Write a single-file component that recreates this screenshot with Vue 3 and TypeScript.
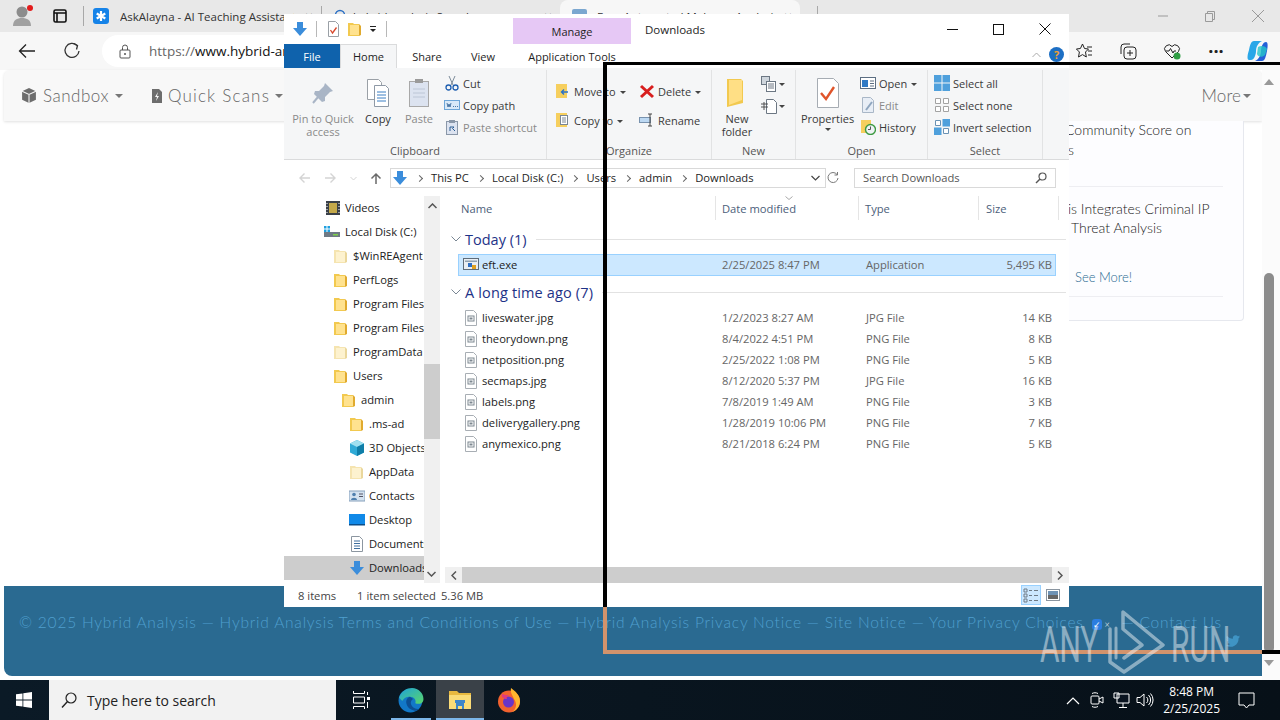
<template>
  <div class="screen">
    <svg class="defs" width="0" height="0" aria-hidden="true">
      <symbol id="folder" viewBox="0 0 16 16">
        <path d="M1 2h5l1 1h5v12H1z" fill="#f2c94f" />
        <path d="M3 4h9v10H3z" fill="#ffe28f" />
        <path d="M12 3l2 2v9l-2 1z" fill="#e0aa2e" />
      </symbol>
      <symbol id="folder-pale" viewBox="0 0 16 16">
        <path d="M1 2h5l1 1h5v12H1z" fill="#f5e4b0" />
        <path d="M3 4h9v10H3z" fill="#fdf2cf" />
        <path d="M12 3l2 2v9l-2 1z" fill="#ead79c" />
      </symbol>
      <symbol id="arrow-down" viewBox="0 0 16 16">
        <path d="M5 1h6v6h4l-7 8-7-8h4z" fill="#3b8ddb" />
      </symbol>
      <symbol id="image-file" viewBox="0 0 16 16">
        <path d="M2.500.500h8l3 3v12h-11z" fill="#fff" stroke="#a8aeb4" />
        <rect x="5" y="6" width="6" height="5" fill="#fff" stroke="#7d8790" />
        <rect x="6.500" y="7.500" width="3" height="2" fill="#7d8790" />
      </symbol>
    </svg>

    <div class="browser">
      <div class="tabstrip">
        <div class="avatar">
          <svg width="20" height="22" viewBox="0 0 20 22">
            <circle cx="10" cy="7" r="5.500" fill="#8c8c8c" />
            <path d="M1 21c0-6 4-8 9-8s9 2 9 8z" fill="#a0a0a0" />
          </svg>
          <span class="avatar-dot"></span>
        </div>
        <svg class="tab-actions" width="16" height="16" viewBox="0 0 16 16">
          <rect x="2" y="2" width="12" height="12" rx="1.500" fill="none" stroke="#111" stroke-width="1.600" />
          <path d="M2 5h12M5 5v9" stroke="#111" stroke-width="1.600" />
        </svg>
        <span class="tab-sep"></span>
        <div class="tab first">
          <span class="favicon">
            <svg width="12" height="12" viewBox="0 0 12 12">
              <path d="M6 1v10M1.700 3.500l8.600 5M10.300 3.500l-8.600 5" stroke="#fff" stroke-width="2.200" />
            </svg>
          </span>
          <span class="tab-title">AskAlayna - AI Teaching Assistant</span>
          <span class="tab-x">×</span>
        </div>
        <span class="tab-sep tab-sep-b"></span>
        <div class="tab second">
          <svg width="14" height="14" viewBox="0 0 14 14">
            <circle cx="6" cy="6" r="4.500" fill="none" stroke="#2a6fc4" stroke-width="1.500" />
            <path d="M9.500 9.500L13 13" stroke="#2a6fc4" stroke-width="1.500" />
          </svg>
          <span class="tab-title">hybrid-analysis Search</span>
          <span class="tab-x">×</span>
        </div>
        <div class="tab third">
          <span class="tab-icon"></span>
          <span class="tab-title">Free Automated Malware Analysis</span>
          <span class="tab-x">×</span>
        </div>
        <span class="tab-sep tab-sep-c"></span>
        <div class="winctl">
          <span>
            <svg width="12" height="12" viewBox="0 0 12 12"><path d="M1 6h10" stroke="#9a9a9a" /></svg>
          </span>
          <span>
            <svg width="12" height="12" viewBox="0 0 12 12"><path d="M1.500 3.500h7v8h-7zM3.500 3.500v-2h7v8h-2" fill="none" stroke="#9a9a9a" /></svg>
          </span>
          <span>
            <svg width="14" height="14" viewBox="0 0 14 14"><path d="M1 1l12 12M13 1L1 13" stroke="#9a9a9a" /></svg>
          </span>
        </div>
      </div>

      <div class="toolbar">
        <svg class="tb-back" width="18" height="16" viewBox="0 0 18 16">
          <path d="M17 8H2M8 1.500L1.500 8 8 14.500" fill="none" stroke="#222" stroke-width="1.300" />
        </svg>
        <svg class="tb-reload" width="18" height="18" viewBox="0 0 18 18">
          <path d="M14 3.500A7 7 0 1 0 16 9" fill="none" stroke="#333" stroke-width="1.300" />
          <path d="M10.500 1.500l4 2-1 4" fill="none" stroke="#333" stroke-width="1.300" />
        </svg>
        <div class="urlbar">
          <svg width="12" height="15" viewBox="0 0 12 15">
            <rect x="1" y="6" width="10" height="8" rx="1" fill="none" stroke="#555" />
            <path d="M3.500 6V3.500a2.500 2.500 0 0 1 5 0V6" fill="none" stroke="#555" />
            <circle cx="6" cy="10" r="1" fill="#555" />
          </svg>
          <span class="url"><span class="url-dim">https://</span>www.hybrid-analysis.com</span>
        </div>
        <div class="tb-right">
          <svg width="18" height="18" viewBox="0 0 18 18">
            <path d="M7.500 2l2 4.500 4 .5-3 3 .8 5-3.800-2.400-4 2.400.9-5-3-3 4-.5z" fill="none" stroke="#222" />
            <path d="M12 5h5M13 9h4M13 13h4" stroke="#222" />
          </svg>
          <svg width="18" height="18" viewBox="0 0 18 18">
            <rect x="5" y="5" width="12" height="12" rx="3" fill="none" stroke="#222" />
            <path d="M2 12V5a3 3 0 0 1 3-3h6M11 8v6M8 11h6" fill="none" stroke="#222" />
          </svg>
          <svg width="18" height="18" viewBox="0 0 18 18">
            <path d="M9 16L2.500 9.500a4 4 0 0 1 6.500-5 4 4 0 0 1 6.500 5z" fill="none" stroke="#222" />
            <path d="M3 9h3l1.500-2.500L10 11l1-2h2" fill="none" stroke="#222" />
            <circle cx="14" cy="14" r="3.500" fill="#2f9e44" />
          </svg>
          <span class="tb-dots">···</span>
          <svg width="24" height="24" viewBox="0 0 24 24">
            <path d="M8 2h8c-4 2-6 6-6 10s-2 9-5 9H3C1 21 1 17 3 11 4 6 5 2 8 2z" fill="#2aa7e8" />
            <path d="M16 22H9c4-2 6-6 6-10s2-9 5-9c2 0 2 4 1 9-1 5-2 10-5 10z" fill="#2460d8" />
            <path d="M12 8c3-2 8-1 9 2l-2 6c-3 3-7 2-8-1z" fill="#26c5c9" opacity=".8" />
          </svg>
        </div>
      </div>

      <div class="viewport">
        <div class="page">
          <nav class="site-nav">
            <span class="nav-item sandbox">
              <svg width="16" height="17" viewBox="0 0 15 16">
                <path d="M7.500 1l6.500 3v8l-6.500 3L1 12V4z" fill="#6d6d6d" />
                <path d="M1 4l6.500 3L14 4M7.500 7v8" fill="none" stroke="#f7f7f7" />
              </svg>
              Sandbox<i class="caret"></i>
            </span>
            <span class="nav-item quick">
              <svg width="12" height="16" viewBox="0 0 12 16">
                <path d="M1 1h7l3 3v11H1z" fill="#6d6d6d" />
                <path d="M7 4L4 9h2l-1 4 3-5H6z" fill="#f7f7f7" />
              </svg>
              Quick Scans<i class="caret"></i>
            </span>
            <span class="nav-item more">More<i class="caret"></i></span>
          </nav>
          <div class="page-main">
            <aside class="news-card">
              <div class="news-item first-news">
                <p>Community Score on</p>
                <p>is</p>
              </div>
              <div class="news-item second-news">
                <p>is Integrates Criminal IP</p>
                <p class="indent">Threat Analysis</p>
                <a class="see-more">See More!</a>
              </div>
            </aside>
          </div>
          <footer class="site-footer">
            <p>© 2025 Hybrid Analysis — Hybrid Analysis Terms and Conditions of Use — Hybrid Analysis Privacy Notice — Site Notice — Your Privacy Choices <span class="privacy-badge"><b>✓</b><em>×</em></span> — Contact Us</p>
            <svg class="twitter" width="14" height="12" viewBox="0 0 24 20">
              <path d="M24 2.400c-.9.400-1.800.700-2.800.800 1-.6 1.800-1.600 2.200-2.700-1 .6-2 1-3.100 1.200A4.900 4.900 0 0 0 11.900 6.200C7.800 6 4.200 4 1.700.9c-1.300 2.300-.6 5.100 1.500 6.500-.8 0-1.600-.2-2.200-.6 0 2.400 1.700 4.400 4 4.900-.7.200-1.500.2-2.200.1.600 2 2.400 3.400 4.600 3.400A9.900 9.900 0 0 1 0 17.700 14 14 0 0 0 21.500 5.300c1-.7 1.800-1.700 2.500-2.900z" fill="#3f94c4" />
            </svg>
          </footer>
        </div>
        <div class="page-scroll">
          <i class="sb-up"></i>
          <span class="sb-thumb"></span>
          <i class="sb-down"></i>
        </div>
      </div>
    </div>

    <div class="taskbar">
      <span class="start">
        <svg width="16" height="16" viewBox="0 0 16 16">
          <path d="M0 2.300l6.500-.9v6.200H0zM7.300 1.300L16 0v7.600H7.300zM0 8.400h6.500v6.200L0 13.700zM7.300 8.400H16V16l-8.700-1.200z" fill="#fff" />
        </svg>
      </span>
      <div class="searchbox">
        <svg width="18" height="18" viewBox="0 0 18 18">
          <circle cx="11" cy="7" r="5" fill="none" stroke="#222" stroke-width="1.200" />
          <path d="M7.500 10.500L2 16.500" stroke="#222" stroke-width="1.400" />
        </svg>
        <span>Type here to search</span>
      </div>
      <span class="task-btn">
        <svg width="18" height="18" viewBox="0 0 18 18">
          <path d="M1.500 0v2.500h11V0M1.500 6h11v6h-11zM1.500 18v-2.500h11V18" fill="none" stroke="#fff" />
          <path d="M15 6h3v3h-3z" fill="#fff" />
          <path d="M15.500 1v3M15.500 11v6" stroke="#fff" />
        </svg>
      </span>
      <span class="task-btn edge">
        <svg width="26" height="26" viewBox="0 0 24 24">
          <defs>
            <linearGradient id="edge-top" x1="0" y1="0" x2="1" y2="1">
              <stop offset="0" stop-color="#1fa3d8" />
              <stop offset="1" stop-color="#5ad66a" />
            </linearGradient>
          </defs>
          <circle cx="11.500" cy="12.500" r="11" fill="#1278c8" />
          <path d="M1 10C3 4 8 1 13 1c6 0 10.500 5 10.500 10 0 4-4 5.500-7.500 4 1-3-1-6-5-6-4 0-6 2-7 4z" fill="url(#edge-top)" />
          <path d="M11 9c-3 1-4 4-3 7 1 4 5 6 9 6l3-2c-4 1-7-1-8-4-.5-2 0-4 2-5z" fill="#0c4f94" />
        </svg>
      </span>
      <span class="task-btn active">
        <svg width="22" height="18" viewBox="0 0 22 18">
          <path d="M0 0h8l2 2h12v16H0z" fill="#e9b93f" />
          <path d="M0 4h22v14H0z" fill="#fbdc77" />
          <path d="M6 9h10v3h-1v6h-2v-3H9v3H7v-6H6z" fill="#3f86c8" />
        </svg>
      </span>
      <span class="task-btn">
        <svg width="24" height="26" viewBox="0 0 24 26">
          <circle cx="12" cy="14.500" r="11" fill="#f2622e" />
          <path d="M14 1c4 3 9 7 9 13 0 5-3 9-8 11 5-3 5-9 2-13-1-3-4-6-3-11z" fill="#ffb52e" />
          <circle cx="11.500" cy="15" r="5.500" fill="#6a35c8" />
          <path d="M5 7c2 1 5 1 7 1-2 1-3 3-2 4-3 0-6-2-5-5z" fill="#e0397f" />
        </svg>
      </span>
      <div class="tray">
        <span class="tray-ic">
          <svg width="14" height="9" viewBox="0 0 14 9"><path d="M1 8l6-6 6 6" fill="none" stroke="#fff" stroke-width="1.200" /></svg>
        </span>
        <span class="tray-ic">
          <svg width="14" height="18" viewBox="0 0 14 18">
            <rect x="1" y="5" width="8" height="8" rx="1" fill="none" stroke="#fff" />
            <path d="M9 8l4-2v6l-4-2M2 2.500c2-1 4-1 6 0M2 15.500c2 1 4 1 6 0" fill="none" stroke="#fff" />
          </svg>
        </span>
        <span class="tray-ic">
          <svg width="17" height="17" viewBox="0 0 17 17">
            <path d="M4 2h12v9H4zM1 1h5v5H1zM10 11v4M6 15.500h8" fill="#0a1420" stroke="#fff" />
          </svg>
        </span>
        <span class="tray-ic">
          <svg width="18" height="16" viewBox="0 0 18 16">
            <path d="M1 5.500h3L8 2v12l-4-3.500H1zM10.500 5a4 4 0 0 1 0 6M12.500 3a7 7 0 0 1 0 10M14.500 1.500a9.500 9.500 0 0 1 0 13" fill="none" stroke="#fff" />
          </svg>
        </span>
        <div class="clock">
          <span>8:48 PM</span>
          <span>2/25/2025</span>
        </div>
        <svg class="notif" width="17" height="17" viewBox="0 0 17 17">
          <path d="M1 1h15v12h-5l-2.500 3L6 13H1z" fill="none" stroke="#fff" />
        </svg>
      </div>
    </div>

    <!-- explorer window floating on top of the browser -->
    <section class="explorer">
      <header class="ex-title">
        <svg class="qat-down" width="16" height="16"><use href="#arrow-down" /></svg>
        <i class="qat-sep"></i>
        <svg class="qat-check" width="15" height="16" viewBox="0 0 15 16">
          <path d="M2.500.500h7l3 3v12h-10z" fill="#fff" stroke="#9aa0a6" />
          <path d="M4.500 9l2 3 4-5.500" fill="none" stroke="#d8482c" stroke-width="1.300" />
        </svg>
        <svg class="qat-folder" width="16" height="16"><use href="#folder" /></svg>
        <svg class="qat-drop" width="8" height="8" viewBox="0 0 8 8">
          <path d="M1 1.500h6" stroke="#222" />
          <path d="M1 4h6L4 7z" fill="#222" />
        </svg>
        <i class="qat-sep qat-sep-b"></i>
        <span class="manage">Manage</span>
        <span class="ex-name">Downloads</span>
        <div class="ex-ctl">
          <svg width="11" height="11" viewBox="0 0 11 11"><path d="M0 5.500h11" stroke="#111" /></svg>
          <svg width="11" height="11" viewBox="0 0 11 11"><rect x=".5" y=".5" width="10" height="10" fill="none" stroke="#111" /></svg>
          <svg width="12" height="12" viewBox="0 0 12 12"><path d="M.5.500l11 11M11.500.500l-11 11" stroke="#111" /></svg>
        </div>
      </header>

      <div class="ex-tabs">
        <span class="ex-tab file">File</span>
        <span class="ex-tab home">Home</span>
        <span class="ex-tab share">Share</span>
        <span class="ex-tab view">View</span>
        <span class="ex-tab tools">Application Tools</span>
        <span class="tabs-right">
          <svg width="9" height="6" viewBox="0 0 9 6"><path d="M.5 5l4-4 4 4" fill="none" stroke="#aaa" /></svg>
          <span class="help">?</span>
        </span>
      </div>

      <div class="ribbon">
        <div class="r-group clipboard">
          <div class="r-items">
            <div class="big pin">
              <svg width="24" height="24" viewBox="0 0 24 24">
                <path d="M14 2l8 8-3 1-5 5 0 4-3 1-8-8 1-3 4 0 5-5z" fill="#a9b5c6" />
                <path d="M7 16l-5 6" stroke="#a9b5c6" stroke-width="2" />
              </svg>
              <span>Pin to Quick<br />access</span>
            </div>
            <div class="big copy">
              <svg width="26" height="30" viewBox="0 0 26 30">
                <path d="M2.500 1.500h11l3 3v17h-14z" fill="#fff" stroke="#9aa0a6" />
                <path d="M9.500 7.500h11l3 3v18h-14z" fill="#fff" stroke="#8e99a6" />
                <path d="M12 14h9M12 17h9M12 20h9M12 23h9" stroke="#3b7fc4" />
              </svg>
              <span>Copy</span>
            </div>
            <div class="big paste">
              <svg width="22" height="30" viewBox="0 0 22 30">
                <rect x="1.500" y="3.500" width="19" height="25" fill="#dce3f0" stroke="#a8a8a8" />
                <rect x="7" y="1" width="8" height="4" fill="#9a9a9a" />
                <path d="M5 11h12M5 15h12M5 19h12" stroke="#bcc6d6" />
              </svg>
              <span>Paste</span>
            </div>
            <div class="small-col">
              <div class="small">
                <svg width="16" height="16" viewBox="0 0 16 16">
                  <path d="M5 1l4 9M11 1L7 10" stroke="#7d8c9b" />
                  <circle cx="4.500" cy="12.500" r="2.500" fill="none" stroke="#1f5fb0" stroke-width="1.300" />
                  <circle cx="11.500" cy="12.500" r="2.500" fill="none" stroke="#1f5fb0" stroke-width="1.300" />
                </svg>
                <span>Cut</span>
              </div>
              <div class="small">
                <svg width="16" height="16" viewBox="0 0 16 16">
                  <rect x=".5" y="3.500" width="15" height="9" fill="#d9e9f8" stroke="#6ea6d8" />
                  <path d="M3 6l1 4 1-3 1 3 1-4M9 9.500h1M11 9.500h1M13 9.500h1" fill="none" stroke="#2a5c92" stroke-width=".8" />
                </svg>
                <span>Copy path</span>
              </div>
              <div class="small muted">
                <svg width="16" height="16" viewBox="0 0 16 16">
                  <rect x="2.500" y="2.500" width="11" height="13" fill="#dce3f0" stroke="#8a97a8" />
                  <rect x="5" y="1" width="6" height="3" fill="#8a97a8" />
                  <path d="M6 12V8h4l-1.500 1.500L11 12" fill="none" stroke="#2a5c92" />
                </svg>
                <span>Paste shortcut</span>
              </div>
            </div>
          </div>
          <label>Clipboard</label>
        </div>

        <div class="r-group organize">
          <div class="r-items">
            <div class="two-col">
              <div class="small">
                <svg width="16" height="16" viewBox="0 0 16 16">
                  <path d="M1 1h11v14H1z" fill="#f6cf5e" />
                  <path d="M13 9H7M9 6.500L6.500 9 9 11.500" fill="none" stroke="#2a72c8" stroke-width="1.400" />
                </svg>
                <span>Move to<i class="mini-caret"></i></span>
              </div>
              <div class="small">
                <svg width="16" height="16" viewBox="0 0 16 16">
                  <path d="M1 1h11v14H1z" fill="#f6cf5e" />
                  <rect x="5.500" y="3.500" width="7" height="9" fill="#fff" stroke="#7a8794" />
                  <path d="M7 6h4M7 8h4M7 10h4" stroke="#7a8794" />
                </svg>
                <span>Copy to<i class="mini-caret"></i></span>
              </div>
            </div>
            <div class="two-col">
              <div class="small">
                <svg width="16" height="16" viewBox="0 0 16 16">
                  <path d="M2 3l12 11M14 3L2 14" stroke="#d81e1e" stroke-width="3" />
                </svg>
                <span>Delete<i class="mini-caret"></i></span>
              </div>
              <div class="small">
                <svg width="16" height="16" viewBox="0 0 16 16">
                  <rect x=".5" y="5.500" width="11" height="5" fill="#bcd8f2" stroke="#7892ae" />
                  <path d="M11 2v12M9 2h4M9 14h4" stroke="#444" />
                </svg>
                <span>Rename</span>
              </div>
            </div>
          </div>
          <label>Organize</label>
        </div>

        <div class="r-group newg">
          <div class="r-items">
            <div class="big new-folder">
              <svg width="24" height="32" viewBox="0 0 24 32">
                <path d="M2 2h14l2 2v22L2 30z" fill="#f2c94f" />
                <path d="M4 3h13v20l-13 5z" fill="#ffdf85" />
              </svg>
              <span>New<br />folder</span>
            </div>
            <div class="new-small">
              <span>
                <svg width="17" height="17" viewBox="0 0 17 17">
                  <rect x=".5" y=".5" width="8" height="8" fill="#cfd6dd" stroke="#6c7783" />
                  <rect x="5.500" y="5.500" width="9" height="10" fill="#fff" stroke="#6c7783" />
                  <path d="M7 8h6M7 10h6M7 12h6" stroke="#6c7783" />
                </svg>
                <i class="mini-caret"></i>
              </span>
              <span>
                <svg width="17" height="17" viewBox="0 0 17 17">
                  <path d="M5.500 1.500h7l3 3v11h-10z" fill="#fff" stroke="#6c7783" />
                  <path d="M0 6h7M0 9h7M3 4v8" stroke="#444" stroke-width=".9" />
                </svg>
                <i class="mini-caret"></i>
              </span>
            </div>
          </div>
          <label>New</label>
        </div>

        <div class="r-group open">
          <div class="r-items">
            <div class="big props">
              <svg width="24" height="32" viewBox="0 0 24 32">
                <path d="M1.500 1.500h16l5 5v24h-21z" fill="#fff" stroke="#a6acb3" />
                <path d="M5 16l5 6 8-12" fill="none" stroke="#e0542a" stroke-width="2.400" />
              </svg>
              <span>Properties</span>
              <i class="mini-caret alone"></i>
            </div>
            <div class="small-col">
              <div class="small">
                <svg width="16" height="16" viewBox="0 0 16 16">
                  <rect x=".5" y="2.500" width="15" height="11" fill="#fff" stroke="#5c6e82" />
                  <rect x="2" y="5" width="6" height="7" fill="#2f79c4" />
                  <path d="M10 6h4M10 8.500h4M10 11h4" stroke="#5c6e82" />
                </svg>
                <span>Open<i class="mini-caret"></i></span>
              </div>
              <div class="small muted">
                <svg width="16" height="16" viewBox="0 0 16 16">
                  <path d="M2.500.500h8l3 3v12h-11z" fill="#e8eef6" stroke="#a9b7c7" />
                  <path d="M6 13l6-8" stroke="#8fa6bf" stroke-width="2" />
                </svg>
                <span>Edit</span>
              </div>
              <div class="small">
                <svg width="16" height="16" viewBox="0 0 16 16">
                  <path d="M1 1h10v13H1z" fill="#f6cf5e" />
                  <circle cx="10.500" cy="10.500" r="5" fill="#eef2f4" stroke="#3d9a42" stroke-width="1.400" />
                  <path d="M10.500 7.500v3h-2.500" fill="none" stroke="#555" />
                </svg>
                <span>History</span>
              </div>
            </div>
          </div>
          <label>Open</label>
        </div>

        <div class="r-group selectg">
          <div class="r-items">
            <div class="small-col">
              <div class="small">
                <svg width="16" height="16" viewBox="0 0 16 16">
                  <rect width="7.500" height="7.500" fill="#4fa0dc" />
                  <rect x="8.500" width="7.500" height="7.500" fill="#4fa0dc" />
                  <rect y="8.500" width="7.500" height="7.500" fill="#4fa0dc" />
                  <rect x="8.500" y="8.500" width="7.500" height="7.500" fill="#4fa0dc" />
                </svg>
                <span>Select all</span>
              </div>
              <div class="small">
                <svg width="16" height="16" viewBox="0 0 16 16">
                  <path d="M1.500 1.500h5v5h-5zM9.500 1.500h5v5h-5zM1.500 9.500h5v5h-5zM9.500 9.500h5v5h-5z" fill="#fff" stroke="#a3a3a3" />
                </svg>
                <span>Select none</span>
              </div>
              <div class="small">
                <svg width="16" height="16" viewBox="0 0 16 16">
                  <rect x="8.500" width="7.500" height="7.500" fill="#4fa0dc" />
                  <rect y="8.500" width="7.500" height="7.500" fill="#4fa0dc" />
                  <path d="M1.500 1.500h5v5h-5zM9.500 9.500h5v5h-5z" fill="#fff" stroke="#6a92b4" />
                </svg>
                <span>Invert selection</span>
              </div>
            </div>
          </div>
          <label>Select</label>
        </div>
      </div>

      <div class="address">
        <div class="nav-btns">
          <svg width="13" height="12" viewBox="0 0 13 12"><path d="M12 6H2M6.500 1.500L2 6l4.500 4.500" fill="none" stroke="#d4d4d4" stroke-width="1.400" /></svg>
          <svg width="13" height="12" viewBox="0 0 13 12"><path d="M1 6h10M6.500 1.500L11 6l-4.500 4.500" fill="none" stroke="#d4d4d4" stroke-width="1.400" /></svg>
          <svg width="7" height="5" viewBox="0 0 7 5"><path d="M.5 1l3 3 3-3" fill="none" stroke="#d4d4d4" /></svg>
          <svg width="12" height="13" viewBox="0 0 12 13"><path d="M6 12V2M1.500 6.500L6 2l4.500 4.500" fill="none" stroke="#6a6a6a" stroke-width="1.500" /></svg>
        </div>
        <div class="path-box">
          <svg width="16" height="16"><use href="#arrow-down" /></svg>
          <template v-for="crumb in crumbs" :key="crumb">
            <i class="crumb-sep"></i>
            <span>{{ crumb }}</span>
          </template>
          <svg class="path-drop" width="9" height="6" viewBox="0 0 9 6"><path d="M.5 1l4 4 4-4" fill="none" stroke="#444" stroke-width="1.200" /></svg>
        </div>
        <span class="refresh">
          <svg width="12" height="12" viewBox="0 0 12 12">
            <path d="M10 2.500A5 5 0 1 0 11 6" fill="none" stroke="#777" />
            <path d="M10.500 0v3h-3" fill="none" stroke="#777" />
          </svg>
        </span>
        <div class="search-box">
          <span>Search Downloads</span>
          <svg width="12" height="12" viewBox="0 0 12 12">
            <circle cx="7.500" cy="4.500" r="3.500" fill="none" stroke="#555" stroke-width="1.200" />
            <path d="M5 7l-4 4" stroke="#555" stroke-width="1.500" />
          </svg>
        </div>
      </div>

      <div class="ex-body">
        <div class="tree">
          <div class="tree-rows">
            <div
              v-for="node in tree"
              :key="node.name"
              class="tree-row"
              :class="[`lv${node.level}`, { current: node.name === 'Downloads' }]"
            >
              <svg v-if="node.icon === 'folder' || node.icon === 'folder-pale' || node.icon === 'arrow-down'" width="16" height="16">
                <use :href="`#${node.icon}`" />
              </svg>
              <svg v-else-if="node.icon === 'videos'" width="16" height="16" viewBox="0 0 16 16">
                <rect x="1" y="1" width="14" height="14" fill="#3a4048" />
                <rect x="4" y="3" width="8" height="10" fill="#c4a94a" />
                <path d="M2 3v1M2 6v1M2 9v1M2 12v1M14 3v1M14 6v1M14 9v1M14 12v1" stroke="#fff" />
              </svg>
              <svg v-else-if="node.icon === 'disk'" class="disk" width="18" height="16" viewBox="0 0 18 16">
                <rect x="1" y="8" width="16" height="5" fill="#6f7a85" />
                <rect x="10" y="10" width="5" height="1.500" fill="#7fd04a" />
                <path d="M1 2h2.500v2.500H1zM4.500 2H7v2.500H4.500zM1 5.500h2.500V8H1zM4.500 5.500H7V8H4.500z" fill="#1fa0e0" />
              </svg>
              <svg v-else-if="node.icon === 'cube'" width="16" height="16" viewBox="0 0 16 16">
                <path d="M8 0l7 3.500v9L8 16l-7-3.500v-9z" fill="#2faad6" />
                <path d="M1 3.500L8 7l7-3.500L8 0z" fill="#9fe0f0" />
                <path d="M8 7v9l7-3.500v-9z" fill="#0f7ea8" />
              </svg>
              <svg v-else-if="node.icon === 'contacts'" width="16" height="16" viewBox="0 0 16 16">
                <rect y="3" width="16" height="10" fill="#d4e2f0" stroke="#86a0bb" />
                <circle cx="5" cy="6.500" r="1.800" fill="#4f7fae" />
                <path d="M2 12c0-3 6-3 6 0z" fill="#4f7fae" />
                <path d="M10 6h4M10 8.500h4" stroke="#556" />
              </svg>
              <svg v-else-if="node.icon === 'desktop'" width="16" height="16" viewBox="0 0 16 16">
                <rect y="2" width="16" height="11" fill="#1089e8" />
                <rect y="12" width="16" height="1.500" fill="#0b4e8a" />
              </svg>
              <svg v-else width="16" height="16" viewBox="0 0 16 16">
                <path d="M2.500.500h8l3 3v12h-11z" fill="#fff" stroke="#8c96a0" />
                <path d="M5 5h6M5 7.500h6M5 10h6M5 12.500h6" stroke="#3f6f9e" />
              </svg>
              <span>{{ node.name }}</span>
            </div>
          </div>
          <div class="tree-scroll">
            <svg width="9" height="6" viewBox="0 0 9 6"><path d="M.5 5l4-4 4 4" fill="none" stroke="#555" stroke-width="1.500" /></svg>
            <span class="tree-thumb"></span>
            <svg class="tree-dn" width="9" height="6" viewBox="0 0 9 6"><path d="M.5 1l4 4 4-4" fill="none" stroke="#555" stroke-width="1.500" /></svg>
          </div>
        </div>

        <div class="files">
          <div class="col-head">
            <span class="c-name">Name</span>
            <span class="c-date">Date modified</span>
            <span class="c-type">Type</span>
            <span class="c-size">Size</span>
            <svg class="sort-mark" width="8" height="4" viewBox="0 0 8 4"><path d="M.5.500L4 3.500 7.500.500" fill="none" stroke="#a9a9a9" /></svg>
          </div>
          <div class="file-area">
            <div class="grp-head">
              <svg width="10" height="6" viewBox="0 0 10 6"><path d="M.5.500L5 5 9.500.500" fill="none" stroke="#7a8794" /></svg>
              <span>Today (1)</span>
              <i></i>
            </div>
            <div class="file-row selected">
              <span class="fname">
                <svg width="16" height="16" viewBox="0 0 16 16">
                  <rect x=".5" y="2.500" width="15" height="11" fill="#e9eef3" stroke="#5e6c7a" />
                  <rect x="2" y="4.500" width="12" height="1.500" fill="#8fa0b0" />
                  <rect x="5" y="7" width="4" height="4" fill="#2f6fc4" />
                  <rect x="9" y="9" width="4" height="4" fill="#e0a020" />
                </svg>
                eft.exe
              </span>
              <span>2/25/2025 8:47 PM</span>
              <span>Application</span>
              <span class="fsize">5,495 KB</span>
            </div>
            <div class="grp-head second-grp">
              <svg width="10" height="6" viewBox="0 0 10 6"><path d="M.5.500L5 5 9.500.500" fill="none" stroke="#7a8794" /></svg>
              <span>A long time ago (7)</span>
              <i></i>
            </div>
            <div v-for="file in files" :key="file.name" class="file-row">
              <span class="fname">
                <svg width="16" height="16"><use href="#image-file" /></svg>
                {{ file.name }}
              </span>
              <span>{{ file.date }}</span>
              <span>{{ file.type }}</span>
              <span class="fsize">{{ file.size }}</span>
            </div>
          </div>
          <div class="h-scroll">
            <svg width="6" height="9" viewBox="0 0 6 9"><path d="M5 .500l-4 4 4 4" fill="none" stroke="#555" stroke-width="1.500" /></svg>
            <span class="h-thumb"></span>
            <svg width="6" height="9" viewBox="0 0 6 9"><path d="M1 .500l4 4-4 4" fill="none" stroke="#555" stroke-width="1.500" /></svg>
          </div>
        </div>
      </div>

      <div class="statusbar">
        <span class="st-items">8 items</span>
        <span class="st-sel">1 item selected</span>
        <span class="st-size">5.36 MB</span>
        <div class="views">
          <span class="view-btn on">
            <svg width="16" height="16" viewBox="0 0 16 16">
              <path d="M1 2h3v3H1zM1 7h3v3H1zM1 12h3v3H1z" fill="none" stroke="#6e7a86" />
              <path d="M6 3.500h3M11 3.500h4M6 8.500h3M11 8.500h4M6 13.500h3M11 13.500h4" stroke="#6e7a86" />
            </svg>
          </span>
          <span class="view-btn">
            <svg width="16" height="16" viewBox="0 0 16 16">
              <rect x="1.500" y="2.500" width="13" height="11" fill="#fff" stroke="#8a95a0" />
              <rect x="3" y="4" width="10" height="4" fill="#6f93b5" />
              <rect x="3" y="8" width="10" height="4" fill="#666" />
            </svg>
          </span>
        </div>
      </div>
    </section>

    <!-- recording frame drawn over everything -->
    <i class="frame f-top"></i>
    <i class="frame f-left"></i>
    <i class="frame f-left-b"></i>
    <i class="frame f-bottom"></i>
    <i class="frame f-bottom-b"></i>

    <div class="watermark">
      <span class="wm-text">ANY</span>
      <svg class="wm-logo" width="65" height="66" viewBox="0 0 65 66">
        <path d="M5 21v33l14 10 39-27L18 4v17l19 16-18 13" fill="none" stroke="#fff" stroke-width="3.500" stroke-linejoin="round" stroke-linecap="round" />
        <path d="M11 20v30" fill="none" stroke="#fff" stroke-width="3" stroke-linecap="round" />
      </svg>
      <span class="wm-text">RUN</span>
    </div>
  </div>
</template>

<script setup lang="ts">
interface TreeNode {
  name: string
  level: number
  icon: string
}

interface FileItem {
  name: string
  date: string
  type: string
  size: string
}

const crumbs = ['This PC', 'Local Disk (C:)', 'Users', 'admin', 'Downloads']

const tree: TreeNode[] = [
  { name: 'Videos', level: 1, icon: 'videos' },
  { name: 'Local Disk (C:)', level: 1, icon: 'disk' },
  { name: '$WinREAgent', level: 2, icon: 'folder-pale' },
  { name: 'PerfLogs', level: 2, icon: 'folder' },
  { name: 'Program Files', level: 2, icon: 'folder' },
  { name: 'Program Files (x86)', level: 2, icon: 'folder' },
  { name: 'ProgramData', level: 2, icon: 'folder-pale' },
  { name: 'Users', level: 2, icon: 'folder' },
  { name: 'admin', level: 3, icon: 'folder' },
  { name: '.ms-ad', level: 4, icon: 'folder' },
  { name: '3D Objects', level: 4, icon: 'cube' },
  { name: 'AppData', level: 4, icon: 'folder-pale' },
  { name: 'Contacts', level: 4, icon: 'contacts' },
  { name: 'Desktop', level: 4, icon: 'desktop' },
  { name: 'Documents', level: 4, icon: 'doc' },
  { name: 'Downloads', level: 4, icon: 'arrow-down' },
]

const files: FileItem[] = [
  { name: 'liveswater.jpg', date: '1/2/2023 8:27 AM', type: 'JPG File', size: '14 KB' },
  { name: 'theorydown.png', date: '8/4/2022 4:51 PM', type: 'PNG File', size: '8 KB' },
  { name: 'netposition.png', date: '2/25/2022 1:08 PM', type: 'PNG File', size: '5 KB' },
  { name: 'secmaps.jpg', date: '8/12/2020 5:37 PM', type: 'JPG File', size: '16 KB' },
  { name: 'labels.png', date: '7/8/2019 1:49 AM', type: 'PNG File', size: '3 KB' },
  { name: 'deliverygallery.png', date: '1/28/2019 10:06 PM', type: 'PNG File', size: '7 KB' },
  { name: 'anymexico.png', date: '8/21/2018 6:24 PM', type: 'PNG File', size: '5 KB' },
]
</script>

<style>
html,
body {
  margin: 0;
  overflow: hidden;
}
</style>

<style scoped>
.screen {
  position: relative;
  width: 1280px;
  height: 720px;
  overflow: hidden;
  display: flex;
  flex-direction: column;
  font-family: 'Open Sans', 'Noto Sans', sans-serif;
  background: #fff;
}

.defs {
  position: absolute;
}

.browser {
  height: 680px;
  display: flex;
  flex-direction: column;
  background: #f7f7f7;
}

.tabstrip {
  position: relative;
  height: 32px;
  display: flex;
  align-items: center;
  background: #e8e8e8;
  font-size: 11.500px;
  color: #333;
}

.avatar {
  position: relative;
  margin-left: 12px;
  width: 20px;
  height: 22px;
}

.avatar-dot {
  position: absolute;
  right: -1px;
  top: 0;
  width: 6px;
  height: 6px;
  border-radius: 50%;
  background: #e31b1b;
}

.tab-actions {
  margin-left: 20px;
}

.tab-sep {
  width: 1px;
  height: 20px;
  margin-left: 15px;
  background: #a8a8a8;
  flex: none;
}

.tab {
  display: flex;
  align-items: center;
  height: 32px;
  overflow: hidden;
  box-sizing: border-box;
  flex: none;
}

.tab.first {
  width: 237px;
  padding-left: 9px;
  gap: 11px;
}

.favicon {
  flex: none;
  width: 16px;
  height: 16px;
  border-radius: 3px;
  background: #1683e8;
  display: flex;
  align-items: center;
  justify-content: center;
}

.tab-title {
  flex: 1;
  white-space: nowrap;
  overflow: hidden;
}

.tab-x {
  font-size: 14px;
  margin-right: 8px;
}

.tab-sep-b {
  margin-left: 0;
}

.tab.second {
  width: 238px;
  padding-left: 12px;
  gap: 5px;
}

.tab.third {
  width: 240px;
  padding-left: 12px;
  gap: 10px;
  background: #f7f7f7;
  border-radius: 8px 8px 0 0;
}

.tab-icon {
  width: 15px;
  height: 15px;
  flex: none;
  background: #7ba7d0;
  border-radius: 2px;
}

.tab-sep-c {
  margin-left: 17px;
}

.winctl {
  margin-left: auto;
  display: flex;
  align-items: center;
  gap: 35px;
  padding-right: 15px;
}

.winctl span {
  display: flex;
}

.toolbar {
  height: 38px;
  display: flex;
  align-items: center;
  background: #f7f7f7;
}

.tb-back {
  margin-left: 18px;
}

.tb-reload {
  margin-left: 27px;
}

.urlbar {
  margin-left: 21px;
  width: 260px;
  height: 32px;
  padding-left: 17px;
  box-sizing: border-box;
  border-radius: 16px 0 0 16px;
  background: #fff;
  display: flex;
  align-items: center;
  gap: 18px;
  font-size: 13.500px;
  white-space: nowrap;
  overflow: hidden;
  color: #111;
}

.url-dim {
  color: #666;
}

.tb-right {
  margin-left: auto;
  display: flex;
  align-items: center;
  gap: 26px;
  padding-right: 10px;
}

.tb-dots {
  font-size: 18px;
  font-weight: 700;
  width: 18px;
  text-align: center;
  color: #222;
  margin-right: -5px;
}

.viewport {
  flex: 1;
  display: flex;
  min-height: 0;
  padding-left: 4px;
  background: #fff;
}

.page {
  flex: 1;
  display: flex;
  flex-direction: column;
  background: #fff;
  min-width: 0;
}

.site-nav {
  height: 51px;
  flex: none;
  display: flex;
  align-items: center;
  padding-left: 17px;
  gap: 28px;
  background: #f8f8f8;
  box-shadow: 0 1px 3px rgba(0, 0, 0, 0.12);
  font-family: Lato, sans-serif;
  font-weight: 300;
  font-size: 17px;
  color: #666;
  border-radius: 6px 6px 0 0;
}

.nav-item {
  display: flex;
  align-items: center;
  gap: 6px;
  letter-spacing: 0.5px;
}

.nav-item.quick {
  gap: 5px;
  letter-spacing: 1.200px;
}

.nav-item.more {
  margin-left: auto;
  margin-right: 11px;
  gap: 2px;
  letter-spacing: 0.100px;
}

.caret {
  display: inline-block;
  margin-left: 0;
  border-left: 4px solid transparent;
  border-right: 4px solid transparent;
  border-top: 4px solid #777;
}

.page-main {
  flex: 1;
  display: flex;
  justify-content: flex-end;
  padding-right: 18px;
  min-height: 0;
}

.news-card {
  width: 300px;
  height: 200px;
  box-sizing: border-box;
  border: 1px solid #e6e8ee;
  border-top: none;
  border-radius: 0 0 4px 4px;
  font-family: Lato, sans-serif;
  font-weight: 300;
  font-size: 14px;
  color: #222;
  background: #fdfdff;
}

.news-item {
  border-bottom: 1px solid #eeeef2;
  margin-right: 20px;
}

.news-item p {
  margin: 0;
  line-height: 20px;
  white-space: nowrap;
}

.first-news {
  height: 66px;
  margin-top: -1px;
  padding-left: 120px;
}

.second-news {
  height: 110px;
  padding-top: 12px;
  padding-left: 123px;
  box-sizing: border-box;
}

.second-news p {
  line-height: 19px;
}

.indent {
  padding-left: 3px;
}

.see-more {
  display: block;
  margin-top: 32px;
  padding-left: 7px;
  font-size: 13px;
  color: #2a6a91;
}

.site-footer {
  position: relative;
  flex: none;
  height: 90px;
  margin-bottom: 4px;
  background: #2a6a91;
  border-radius: 0 0 0 8px;
  font-family: Lato, sans-serif;
  font-weight: 300;
  font-size: 15.500px;
  color: #4f9fce;
  letter-spacing: 0.790px;
  white-space: nowrap;
}

.site-footer p {
  margin: 0;
  padding: 27px 0 0 15px;
}

.privacy-badge {
  display: inline-flex;
  align-items: center;
  gap: 2px;
  height: 10px;
  margin: 0 6px 0 3px;
  font-size: 9px;
  font-style: normal;
  color: #fff;
}

.privacy-badge b {
  background: #2b7de0;
  border-radius: 3px;
  padding: 0 1px;
}

.privacy-badge em {
  font-style: normal;
}

.twitter {
  position: absolute;
  right: 22px;
  top: 49px;
}

.page-scroll {
  position: relative;
  width: 18px;
  flex: none;
  background: #fbfbfb;
}

.sb-up,
.sb-down {
  position: absolute;
  left: 2px;
  border-left: 5px solid transparent;
  border-right: 5px solid transparent;
}

.sb-up {
  top: 9px;
  border-bottom: 6px solid #999;
}

.sb-down {
  top: 590px;
  border-top: 6px solid #999;
}

.sb-thumb {
  position: absolute;
  left: 2px;
  top: 203px;
  width: 10px;
  height: 380px;
  background: #8c8c8c;
  border-radius: 5px;
}

.taskbar {
  height: 40px;
  flex: none;
  display: flex;
  align-items: center;
  background: linear-gradient(90deg, #0b1a26, #071018);
  color: #fff;
}

.start {
  width: 48px;
  height: 40px;
  display: flex;
  align-items: center;
  justify-content: center;
}

.searchbox {
  margin-left: 1px;
  width: 287px;
  height: 40px;
  box-sizing: border-box;
  padding-left: 11px;
  background: #f2f2f2;
  color: #222;
  display: flex;
  align-items: center;
  gap: 9px;
  font-size: 14px;
}

.task-btn {
  position: relative;
  width: 50px;
  height: 40px;
  display: flex;
  align-items: center;
  justify-content: center;
}

.task-btn.edge::after,
.task-btn.active::after {
  content: '';
  position: absolute;
  left: 0;
  right: 0;
  bottom: 0;
  height: 2px;
  background: #7cb6e8;
}

.task-btn.edge::after {
  left: 5px;
  right: 5px;
}

.task-btn.active {
  width: 48px;
  background: #3a4148;
}

.tray {
  margin-left: auto;
  display: flex;
  align-items: center;
  padding-right: 25px;
}

.tray-ic {
  width: 24px;
  display: flex;
  justify-content: center;
}

.clock {
  display: flex;
  flex-direction: column;
  align-items: center;
  margin-left: 6px;
  font-size: 12px;
  line-height: 17px;
}

.notif {
  margin-left: 18px;
}

.explorer {
  position: absolute;
  left: 284px;
  top: 14px;
  width: 785px;
  height: 593px;
  display: flex;
  flex-direction: column;
  background: #fff;
  font-size: 11.200px;
  color: #1e1e1e;
}

.ex-title {
  position: relative;
  height: 30px;
  flex: none;
  display: flex;
  align-items: center;
  padding-left: 8px;
}

.qat-sep {
  width: 1px;
  height: 16px;
  margin-left: 8px;
  background: #b8b8b8;
}

.qat-check {
  margin-left: 9px;
}

.qat-folder {
  margin-left: 6px;
}

.qat-drop {
  margin-left: 6px;
}

.qat-sep-b {
  margin-left: 9px;
}

.manage {
  position: absolute;
  left: 229px;
  top: 4px;
  width: 118px;
  height: 26px;
  display: flex;
  align-items: center;
  justify-content: center;
  background: #e6c8f5;
  font-size: 11px;
}

.ex-name {
  margin-left: 258px;
  font-size: 11.500px;
}

.ex-ctl {
  margin-left: auto;
  display: flex;
  align-items: center;
  gap: 35px;
  padding-right: 18px;
}

.ex-tabs {
  height: 24px;
  flex: none;
  position: relative;
  display: flex;
  align-items: stretch;
  font-size: 11px;
}

.ex-tab {
  display: flex;
  align-items: center;
  justify-content: center;
}

.file {
  width: 56px;
  background: #0f62ac;
  color: #fff;
}

.home {
  width: 57px;
  background: #f5f6f7;
  border: 1px solid #dadbdc;
  border-bottom: none;
  box-sizing: border-box;
}

.share {
  width: 60px;
}

.view {
  width: 52px;
}

.tools {
  width: 118px;
  margin-left: 4px;
}

.tabs-right {
  position: absolute;
  right: 5px;
  top: 3px;
  display: flex;
  align-items: center;
  gap: 8px;
}

.help {
  width: 15px;
  height: 15px;
  border-radius: 50%;
  background: #1d6fc4;
  color: #f3a032;
  font-size: 11px;
  font-weight: 700;
  display: flex;
  align-items: center;
  justify-content: center;
}

.ribbon {
  height: 92px;
  flex: none;
  display: flex;
  background: #f5f6f7;
  border-bottom: 1px solid #dadbdc;
  box-sizing: border-box;
  font-size: 11px;
  color: #3a3a3a;
}

.r-group {
  flex: none;
  display: flex;
  flex-direction: column;
  border-right: 1px solid #e2e3e4;
  box-sizing: border-box;
  margin: 2px 0 0;
}

.r-group label {
  height: 20px;
  margin-bottom: -1px;
  display: flex;
  align-items: center;
  justify-content: center;
  color: #555;
}

.r-items {
  flex: 1;
  display: flex;
  min-height: 0;
}

.clipboard {
  width: 263px;
}

.organize {
  width: 165px;
}

.newg {
  width: 84px;
}

.open {
  width: 132px;
}

.selectg {
  width: 115px;
}

.big {
  display: flex;
  flex-direction: column;
  align-items: center;
  text-align: center;
  line-height: 13px;
  padding-top: 7px;
}

.big svg {
  height: 32px;
  margin-bottom: 3px;
}

.pin {
  width: 78px;
  color: #8a8a8a;
}

.copy {
  width: 32px;
  color: #333;
}

.paste {
  width: 42px;
  margin-left: 4px;
  color: #8a8a8a;
}

.small-col {
  display: flex;
  flex-direction: column;
  padding-top: 2px;
}

.clipboard .small-col {
  margin-left: 4px;
}

.small {
  height: 22px;
  display: flex;
  align-items: center;
  gap: 3px;
  white-space: nowrap;
}

.muted {
  color: #8a8a8a;
}

.two-col {
  display: flex;
  flex-direction: column;
  justify-content: center;
  gap: 7px;
  height: 70px;
  padding-top: 1px;
  box-sizing: border-box;
}

.organize .two-col:first-child {
  width: 84px;
  margin-left: 8px;
}

.mini-caret {
  display: inline-block;
  margin-left: 4px;
  vertical-align: middle;
  border-left: 3px solid transparent;
  border-right: 3px solid transparent;
  border-top: 3px solid #444;
}

.mini-caret.alone {
  margin: 3px 0 0;
}

.new-folder {
  width: 48px;
  margin-left: 1px;
}

.new-small {
  display: flex;
  flex-direction: column;
  gap: 5px;
  padding-top: 6px;
}

.new-small span {
  display: flex;
  align-items: center;
}

.new-small .mini-caret {
  margin-left: 1px;
}

.props {
  width: 59px;
  flex: none;
  margin-left: 2px;
}

.open .small-col {
  margin-left: 3px;
}

.selectg .small-col {
  margin-left: 6px;
}

.address {
  height: 36px;
  flex: none;
  display: flex;
  align-items: center;
}

.nav-btns {
  width: 106px;
  padding-left: 14px;
  box-sizing: border-box;
  display: flex;
  align-items: center;
  gap: 13px;
}

.path-box {
  position: relative;
  width: 436px;
  height: 20px;
  box-sizing: border-box;
  border: 1px solid #d9d9d9;
  display: flex;
  align-items: center;
  padding-left: 1px;
  gap: 9px;
}

.path-box span {
  padding-bottom: 1px;
}

.crumb-sep {
  width: 4px;
  height: 4px;
  border-top: 1px solid #666;
  border-right: 1px solid #666;
  transform: rotate(45deg);
}

.path-drop {
  position: absolute;
  right: 5px;
  top: 6px;
}

.refresh {
  width: 14px;
  flex: none;
  display: flex;
  justify-content: center;
}

.search-box {
  width: 202px;
  height: 20px;
  box-sizing: border-box;
  border: 1px solid #d9d9d9;
  margin-left: 14px;
  display: flex;
  align-items: center;
  justify-content: space-between;
  padding: 0 8px;
  color: #555;
}

.search-box span {
  padding-bottom: 2px;
}

.ex-body {
  flex: 1;
  display: flex;
  min-height: 0;
}

.tree {
  width: 157px;
  flex: none;
  display: flex;
  overflow: hidden;
}

.tree-rows {
  width: 140px;
  overflow: hidden;
  flex: none;
}

.tree-row {
  height: 24px;
  display: flex;
  align-items: center;
  gap: 4px;
  white-space: nowrap;
  color: #222;
}

.tree-row svg {
  flex: none;
}

.tree-row span {
  padding-bottom: 2px;
}

.tree-row .disk {
  margin-left: -2px;
}

.tree-row.lv1 {
  padding-left: 41px;
}

.tree-row.lv2 {
  padding-left: 49px;
}

.tree-row.lv3 {
  padding-left: 57px;
}

.tree-row.lv4 {
  padding-left: 65px;
}

.tree-row.current {
  background: #cdcdcd;
}

.tree-scroll {
  position: relative;
  width: 16px;
  background: #f0f0f0;
  flex: none;
  display: flex;
  flex-direction: column;
  align-items: center;
  padding-top: 7px;
  box-sizing: border-box;
}

.tree-thumb {
  position: absolute;
  left: 0;
  top: 168px;
  width: 16px;
  height: 75px;
  background: #cdcdcd;
}

.tree-dn {
  position: absolute;
  left: 3px;
  top: 375px;
}

.files {
  flex: 1;
  min-width: 0;
  display: flex;
  flex-direction: column;
}

.col-head {
  position: relative;
  height: 24px;
  flex: none;
  display: grid;
  grid-template-columns: 275px 143px 120px 80px;
  align-items: center;
  color: #4c607a;
}

.col-head span {
  padding-left: 6px;
  height: 24px;
  line-height: 25px;
  border-right: 1px solid #e5e5e5;
  box-sizing: border-box;
}

.c-name {
  padding-left: 20px !important;
}

.c-size {
  padding-left: 7px !important;
}

.sort-mark {
  position: absolute;
  left: 344px;
  top: 0;
}

.file-area {
  flex: 1;
  min-height: 0;
  padding: 8px 0 0 16px;
}

.grp-head {
  height: 22px;
  display: flex;
  align-items: center;
  gap: 4px;
  font-size: 14.500px;
  color: #1e3287;
}

.second-grp span {
  letter-spacing: 0.150px;
}

.grp-head svg {
  margin-left: -6px;
}

.grp-head i {
  flex: 1;
  height: 1px;
  background: #e2e2e2;
  margin-left: 5px;
  margin-right: 3px;
}

.second-grp {
  margin-top: 5px;
  margin-bottom: 5px;
}

.file-row {
  height: 21px;
  width: 598px;
  margin-left: 1px;
  box-sizing: border-box;
  display: grid;
  grid-template-columns: 264px 144px 100px 1fr;
  align-items: center;
  color: #666;
  white-space: nowrap;
}

.file-row > span {
  padding-bottom: 2px;
}

.file-row.selected {
  margin-top: 4px;
  height: 22px;
  grid-template-columns: 263px 144px 100px 1fr;
  background: #cce8ff;
  border: 1px solid #99d1ff;
}

.fname {
  display: flex;
  align-items: center;
  gap: 3px;
  padding-left: 5px;
  color: #222;
}

.selected .fname {
  padding-left: 4px;
}

.fsize {
  text-align: right;
  padding-right: 4px;
}

.selected .fsize {
  padding-right: 3px;
}

.h-scroll {
  height: 16px;
  flex: none;
  margin-left: 4px;
  background: #f0f0f0;
  display: flex;
  align-items: center;
  gap: 5px;
  padding: 0 6px;
}

.h-thumb {
  flex: 1;
  height: 16px;
  background: #cdcdcd;
}

.statusbar {
  height: 24px;
  flex: none;
  display: flex;
  align-items: center;
  color: #444;
}

.st-items {
  margin-left: 14px;
}

.st-sel {
  margin-left: 21px;
}

.st-size {
  margin-left: 5px;
}

.views {
  margin-left: auto;
  display: flex;
  gap: 2px;
  margin-right: 6px;
}

.view-btn {
  width: 20px;
  height: 20px;
  display: flex;
  align-items: center;
  justify-content: center;
  box-sizing: border-box;
}

.view-btn.on {
  background: #cce8ff;
  border: 1px solid #99d1ff;
}

.frame {
  position: absolute;
  pointer-events: none;
}

.f-top {
  left: 603px;
  top: 62px;
  width: 677px;
  height: 3px;
  background: #000;
}

.f-left {
  left: 603px;
  top: 62px;
  width: 4px;
  height: 545px;
  background: #000;
}

.f-left-b {
  left: 603px;
  top: 607px;
  width: 4px;
  height: 47px;
  background: #d2936c;
}

.f-bottom {
  left: 603px;
  top: 650px;
  width: 659px;
  height: 4px;
  background: #d2936c;
}

.f-bottom-b {
  left: 1262px;
  top: 650px;
  width: 18px;
  height: 4px;
  background: #000;
}

.watermark {
  position: absolute;
  left: 1040px;
  top: 608px;
  height: 66px;
  display: flex;
  align-items: center;
  opacity: 0.45;
  color: #fff;
  font-family: Roboto, sans-serif;
  font-weight: 400;
  font-size: 50px;
  line-height: 66px;
}

.wm-logo {
  margin: 0 1px 0 5px;
  flex: none;
}

.wm-text {
  display: inline-block;
  width: 60px;
  padding-top: 8px;
  box-sizing: border-box;
  transform: scaleX(0.6);
  transform-origin: left center;
  white-space: nowrap;
}
</style>
